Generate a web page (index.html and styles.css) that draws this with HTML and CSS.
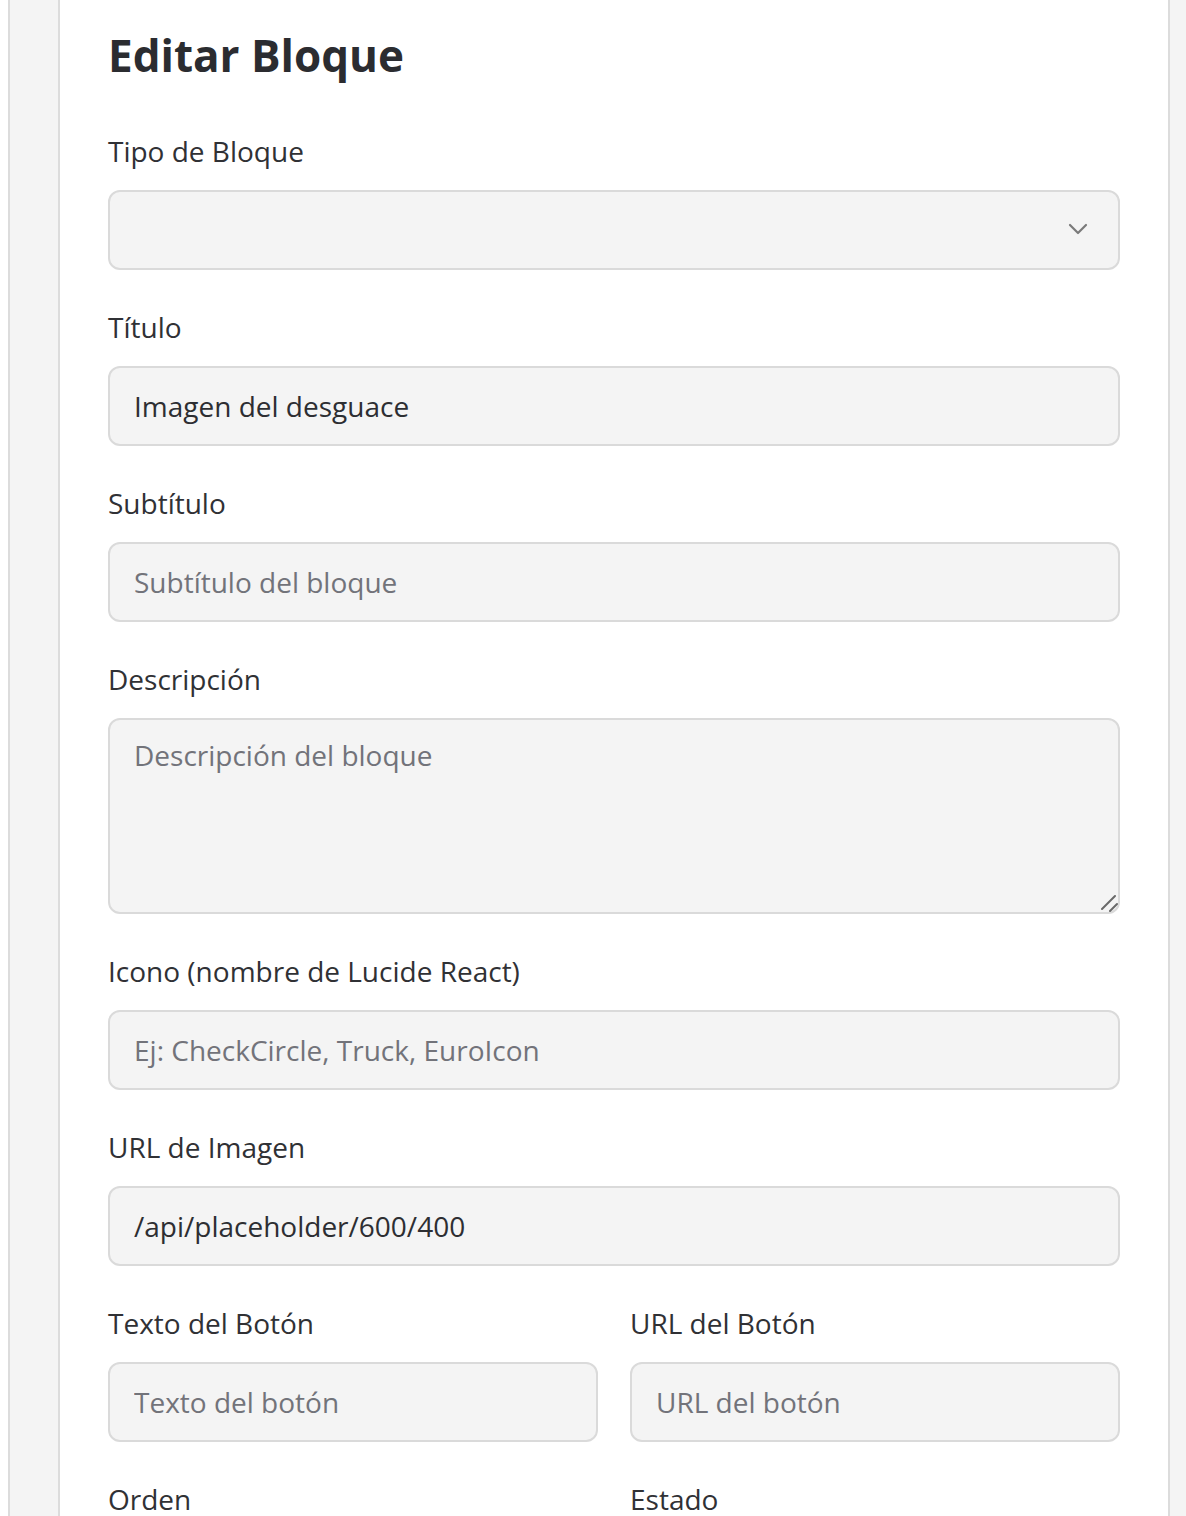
FILE: index.html
```html
<!DOCTYPE html>
<html lang="es">
<head>
<meta charset="utf-8">
<title>Editar Bloque</title>
<link rel="stylesheet" href="styles.css">
</head>
<body>
<div class="outer">
  <div class="card">
    <h1 class="title">Editar Bloque</h1>
    <form class="form">
      <div class="field">
        <label class="label" for="tipo">Tipo de Bloque</label>
        <div class="select-wrap">
          <select class="control select" id="tipo"><option value=""></option></select>
          <svg class="chevron" width="20" height="12" viewBox="0 0 20 12" aria-hidden="true"><path d="M2 2 L10 10 L18 2" fill="none" stroke="#7a7a7a" stroke-width="2.2" stroke-linecap="round" stroke-linejoin="round"/></svg>
        </div>
      </div>
      <div class="field">
        <label class="label" for="titulo">Título</label>
        <input class="control" id="titulo" type="text" value="Imagen del desguace">
      </div>
      <div class="field">
        <label class="label" for="subtitulo">Subtítulo</label>
        <input class="control" id="subtitulo" type="text" placeholder="Subtítulo del bloque">
      </div>
      <div class="field">
        <label class="label" for="descripcion">Descripción</label>
        <div class="textarea-wrap">
          <textarea class="control textarea" id="descripcion" placeholder="Descripción del bloque"></textarea>
          <svg class="grip" width="18" height="18" viewBox="0 0 18 18" aria-hidden="true"><path d="M2 15 L15 2 M10 17 L17 10" fill="none" stroke="#6a6a6a" stroke-width="2" stroke-linecap="round"/></svg>
        </div>
      </div>
      <div class="field">
        <label class="label" for="icono">Icono (nombre de Lucide React)</label>
        <input class="control" id="icono" type="text" placeholder="Ej: CheckCircle, Truck, EuroIcon">
      </div>
      <div class="field">
        <label class="label" for="imagen">URL de Imagen</label>
        <input class="control" id="imagen" type="text" value="/api/placeholder/600/400">
      </div>
      <div class="row">
        <div class="field">
          <label class="label" for="btntexto">Texto del Botón</label>
          <input class="control" id="btntexto" type="text" placeholder="Texto del botón">
        </div>
        <div class="field">
          <label class="label" for="btnurl">URL del Botón</label>
          <input class="control" id="btnurl" type="text" placeholder="URL del botón">
        </div>
      </div>
      <div class="row">
        <div class="field">
          <label class="label" for="orden">Orden</label>
          <input class="control" id="orden" type="number" value="1">
        </div>
        <div class="field">
          <label class="label" for="estado">Estado</label>
          <input class="control" id="estado" type="text">
        </div>
      </div>
    </form>
  </div>
</div>
</body>
</html>
```
FILE: styles.css
```css
html, body {
  margin: 0;
  padding: 0;
  overflow: hidden;
  background: #ffffff;
}

.outer {
  margin-left: 8px;
  width: 1240px;
  min-height: 1600px;
  background: #f4f4f4;
  border-left: 2px solid #dcdcdc;
  padding-left: 48px;
  box-sizing: border-box;
}

.card {
  width: 1112px;
  box-sizing: border-box;
  background: #ffffff;
  border-left: 2px solid #dcdcdc;
  border-right: 2px solid #dcdcdc;
  padding: 27px 48px 0 48px;
  min-height: 1600px;
  font-family: "Open Sans", "Noto Sans", sans-serif;
  color: #2f3034;
}

.title {
  margin: 0 0 49px 0;
  font-size: 44px;
  line-height: 56px;
  font-weight: 700;
  color: #2b2c30;
}

.form {
  display: flex;
  flex-direction: column;
}

.field {
  display: flex;
  flex-direction: column;
  margin-bottom: 38px;
}

.label {
  font-size: 28px;
  line-height: 40px;
  margin-bottom: 18px;
  margin-top: -1px;
  padding-bottom: 1px;
  color: #303135;
}

.control {
  box-sizing: border-box;
  width: 100%;
  height: 80px;
  margin: 0;
  padding: 18px 24px;
  font-family: "Open Sans", "Noto Sans", sans-serif;
  font-size: 28px;
  line-height: 40px;
  color: #2d2e32;
  background: #f4f4f4;
  border: 2px solid #dadada;
  border-radius: 12px;
  outline: none;
}

.control::placeholder {
  color: #72737a;
  opacity: 1;
}

.select-wrap,
.textarea-wrap {
  position: relative;
}

.select {
  appearance: none;
  -webkit-appearance: none;
}

.chevron {
  position: absolute;
  right: 32px;
  top: 33px;
  pointer-events: none;
}

.textarea {
  height: 196px;
  padding-top: 15px;
  resize: none;
  display: block;
}

.grip {
  position: absolute;
  right: 2px;
  bottom: 2px;
  pointer-events: none;
}

.row {
  display: grid;
  grid-template-columns: 1fr 1fr;
  column-gap: 32px;
}
```
